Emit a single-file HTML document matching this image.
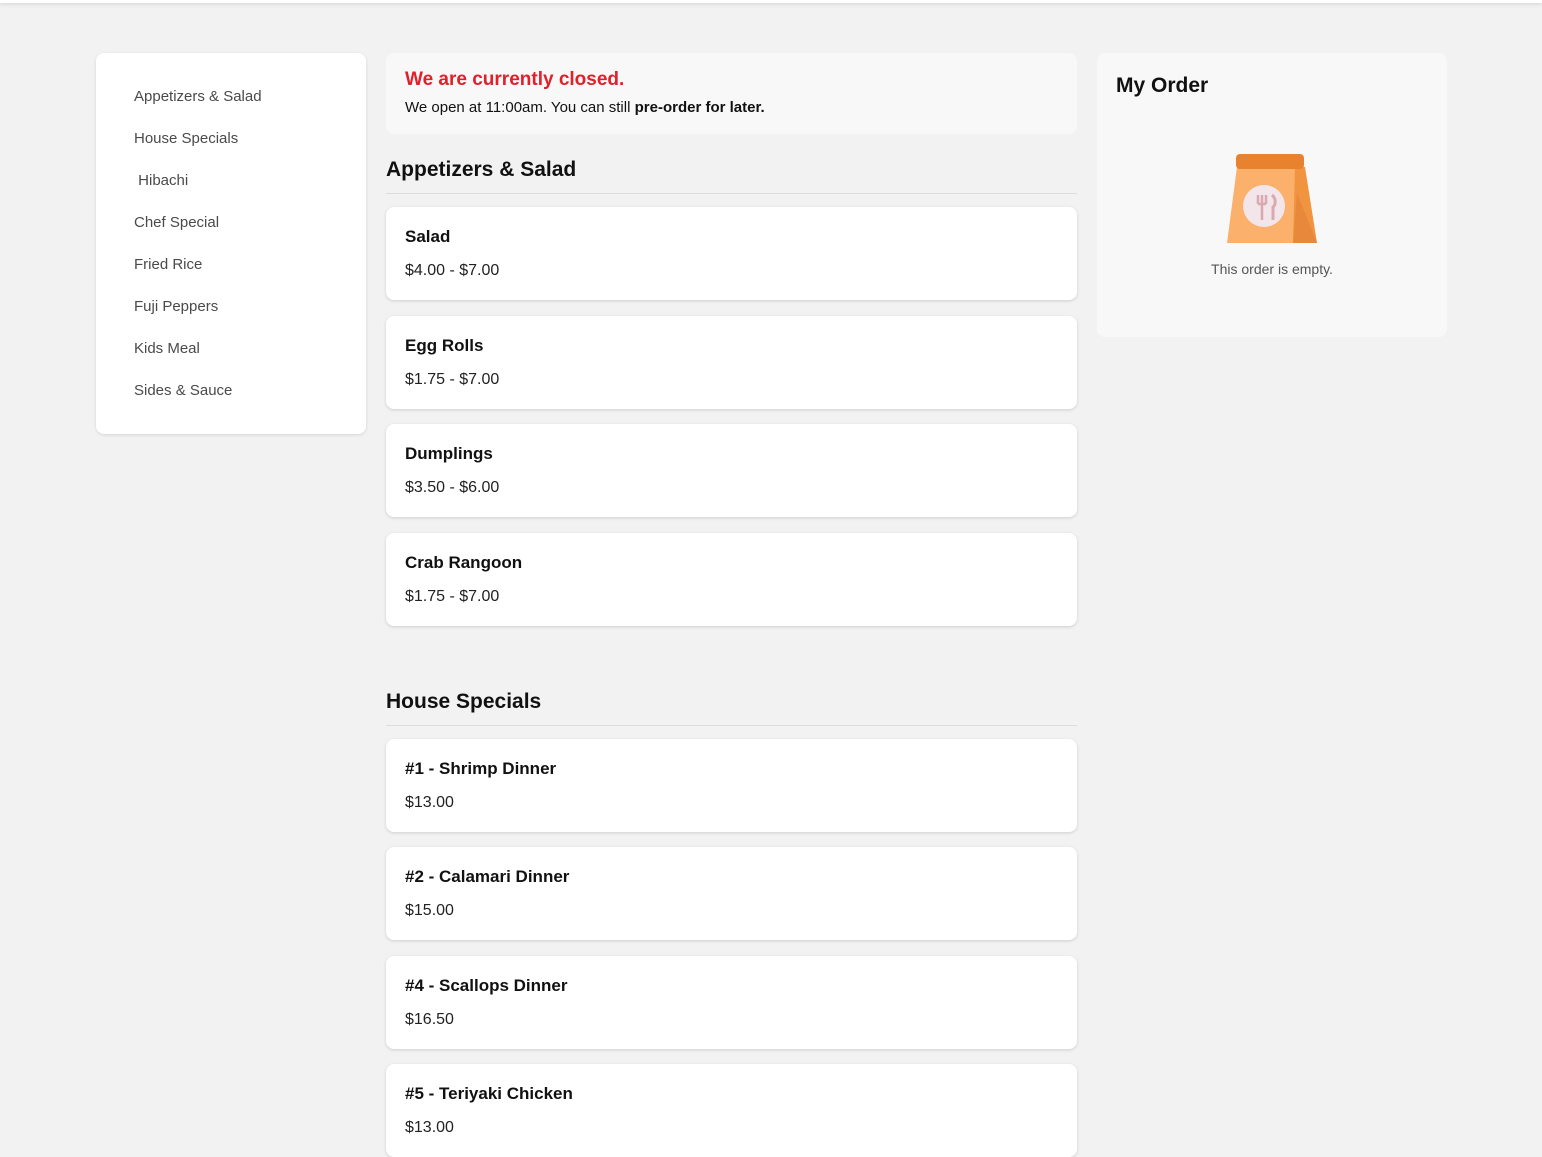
<!DOCTYPE html>
<html><head><style>
*{box-sizing:border-box;margin:0;padding:0}
body{width:1542px;height:1152px;overflow:hidden;background:#f2f2f2;font-family:"Liberation Sans",sans-serif;position:relative}
.top{position:absolute;left:0;top:0;width:1542px;height:3px;background:#fff;box-shadow:0 1px 4px rgba(0,0,0,.15)}
.nav{position:absolute;left:96px;top:53px;width:270px;height:381px;background:#fff;border-radius:8px;box-shadow:0 1px 3px rgba(0,0,0,.12)}
.nav div{position:absolute;left:38px;font-size:15px;color:#4a4a4a}
.closed{position:absolute;left:386px;top:53px;width:691px;height:81px;background:#f8f8f8;border-radius:8px}
.closed h2{position:absolute;left:19px;top:16px;font-size:19px;color:#e0202a;font-weight:bold}
.closed p{position:absolute;left:19px;top:46px;font-size:15px;color:#111}
.sec{position:absolute;left:386px;width:691px;font-size:21px;font-weight:bold;color:#111;border-bottom:1px solid #ddd;height:36px}
.card{position:absolute;left:386px;width:691px;height:93px;background:#fff;border-radius:8px;box-shadow:0 1px 3px rgba(0,0,0,.15)}
.card b{position:absolute;left:19px;top:20px;font-size:17px;color:#111}
.card span{position:absolute;left:19px;top:55px;font-size:16px;color:#222}
.order{position:absolute;left:1097px;top:53px;width:350px;height:284px;background:#f8f8f8;border-radius:8px}
.order h3{position:absolute;left:19px;top:21px;font-size:21px;color:#111}
.order p{position:absolute;left:0;width:350px;text-align:center;top:208px;font-size:14px;color:#555}
</style></head><body>
<div class="top"></div>
<div class="nav">
<div style="top:35px">Appetizers &amp; Salad</div>
<div style="top:77px">House Specials</div>
<div style="top:119px">&nbsp;Hibachi</div>
<div style="top:161px">Chef Special</div>
<div style="top:203px">Fried Rice</div>
<div style="top:245px">Fuji Peppers</div>
<div style="top:287px">Kids Meal</div>
<div style="top:329px">Sides &amp; Sauce</div>
</div>
<div class="closed"><h2>We are currently closed.</h2><p>We open at 11:00am. You can still <b>pre-order for later.</b></p></div>
<div class="sec" style="top:158px">Appetizers &amp; Salad</div>
<div class="card" style="top:207px"><b>Salad</b><span>$4.00 - $7.00</span></div>
<div class="card" style="top:316px"><b>Egg Rolls</b><span>$1.75 - $7.00</span></div>
<div class="card" style="top:424px"><b>Dumplings</b><span>$3.50 - $6.00</span></div>
<div class="card" style="top:533px"><b>Crab Rangoon</b><span>$1.75 - $7.00</span></div>
<div class="sec" style="top:690px">House Specials</div>
<div class="card" style="top:739px"><b>#1 - Shrimp Dinner</b><span>$13.00</span></div>
<div class="card" style="top:847px"><b>#2 - Calamari Dinner</b><span>$15.00</span></div>
<div class="card" style="top:956px"><b>#4 - Scallops Dinner</b><span>$16.50</span></div>
<div class="card" style="top:1064px"><b>#5 - Teriyaki Chicken</b><span>$13.00</span></div>
<div class="order"><h3>My Order</h3>
<svg style="position:absolute;left:128px;top:100px" width="94" height="92" viewBox="0 0 94 92">
<polygon points="12,14 70,14 72,90 2,90" fill="#fbb06b"/>
<polygon points="70,14 80,14 92,90 68,90" fill="#f19440"/>
<polygon points="72,40 92,90 68,90" fill="#e8883a"/>
<rect x="11" y="1" width="68" height="15" rx="4" fill="#e8822e"/>
<circle cx="39" cy="53" r="21" fill="#f3e6ea"/>
<path d="M33 42v9M37 42v9M41 42v9M33 51h8M37 51v16" stroke="#d9a8b0" stroke-width="2.5" fill="none"/>
<path d="M47 42c4 3 4 10 1 12v13" stroke="#d9a8b0" stroke-width="3" fill="none"/>
</svg>
<p>This order is empty.</p></div>
</body></html>
